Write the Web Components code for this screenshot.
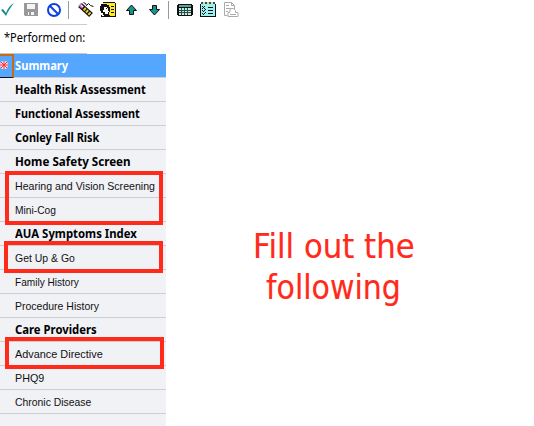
<!DOCTYPE html>
<html lang="en"><head><meta charset="utf-8"><title>Summary</title>
<style>body{margin:0;background:#fff;width:534px;height:426px;overflow:hidden}</style></head><body>
<assessment-app></assessment-app>
<script>
// Text run fitted horizontally to the width given in its "w" attribute.
class FitText extends HTMLElement{
 connectedCallback(){
  const r=this.attachShadow({mode:'open'});
  r.innerHTML='<style>:host{display:block;white-space:nowrap}span{display:inline-block;transform-origin:0 50%}</style><span><slot></slot></span>';
  const s=r.querySelector('span');
  s.style.transform=`scaleX(${+this.getAttribute('w')/s.offsetWidth})`;
 }
}
customElements.define('fit-text',FitText);

class ToolBar extends HTMLElement{
 connectedCallback(){
  this.attachShadow({mode:'open'}).innerHTML=`<style>
  :host{display:block;height:24px;width:534px}svg{display:block}</style>
  <svg width="260" height="24" viewBox="0 0 260 24">
   <path d="M1 10l2-1 3 4C8 8 10 5 14 3 11 7 8 11 6 16z" fill="#14918f"/>
   <path d="M24 3h14v13H25l-1-1z" fill="#999"/><path d="M27 4h8v5h-8zM28 12h6v3h-6z" fill="#f4f4f4"/><path d="M29 12h2v3h-2z" fill="#999"/>
   <circle cx="54" cy="10" r="6" fill="none" stroke="#0b3fe0" stroke-width="2"/><path d="M50 6l8 8" stroke="#0b3fe0" stroke-width="2"/>
   <path d="M68.500 1v18M168.500 1v18" stroke="#999"/>
   <path d="M80 5l11 10" stroke="#111" stroke-width="5.500"/><path d="M79.500 4.500l3.500 3" stroke="#d874cc" stroke-width="3"/><path d="M81 5l2 2" stroke="#fff"/>
   <path d="M84 8.500l7 6.500" stroke="#f2d81f" stroke-width="3.200" stroke-dasharray="2 1.200"/><path d="M84.500 10l5.500 5" stroke="#999" stroke-dasharray="1 1.500"/>
   <path d="M83.500 2.500l2 1 1 2 2-2 2 2 3 1" fill="none" stroke="#111"/>
   <g shape-rendering="crispEdges">
    <path d="M103 3h12v13h-12z" fill="#ffe926"/><path d="M103 2h12v1h-12zM115 3h1v14h-1zM110 16h6v1h-6z" fill="#111"/>
    <path d="M101 4h6v1h2v2h1v5h-1v3h1v2h-9v-2h2v-2h-2v-2h-1V6h1z" fill="#111"/>
    <path d="M104 7h3v1h1v3h1v1h-1v2h-3v-2h-2v-2h1zM102 15h2v1h-2z" fill="#fff"/><path d="M106 8h1v1h-1z" fill="#111"/>
    <path d="M111 6h3v1h-3zM111 9h3v1h-3zM111 12h3v1h-3z" fill="#111"/>
   </g>
   <path d="M131.500 5l5 5.500h-3v4h-4v-4h-3z" fill="#149590" stroke="#111"/>
   <path d="M154.500 15l5-5.500h-3v-4h-4v4h-3z" fill="#149590" stroke="#111"/>
   <g shape-rendering="crispEdges">
    <path d="M178 4h14v1h1v10h-1v1h-14v-1h-1V5h1z" fill="#111"/><path d="M179 5h12v2h-12z" fill="#51a59f"/><path d="M179 8h12v7h-12z" fill="#c9e5dc"/>
    <path d="M179 10h12M179 12.500h12M181.500 8v7M184.500 8v7M187.500 8v7" stroke="#26504a"/>
    <path d="M200 4h16v13h-16z" fill="#111"/><path d="M201 4h14v12h-14z" fill="#9bf2ee"/>
    <path d="M201 2h2v2h-2zM205 2h2v2h-2zM209 2h2v2h-2zM213 2h2v2h-2z" fill="#1648c8"/><path d="M203 2h2v2h-2zM207 2h2v2h-2zM211 2h2v2h-2z" fill="#ffe91f"/>
    <path d="M208 7h5v1h-5zM208 10h5v1h-5zM208 13h5v1h-5z" fill="#111"/><path d="M202 6h1v1h-1zM204 6h1v1h-1zM203 7h1v1h-1zM202 8h1v1h-1zM204 8h1v1h-1zM202 10h1v1h-1zM203 11h1v1h-1zM204 10h1v1h-1zM205 9h1v1h-1zM202 13h1v1h-1zM203 14h1v1h-1zM204 13h1v1h-1zM205 12h1v1h-1z" fill="#111"/>
   </g>
   <path d="M224.500 2.500h7l3 3v4M224.500 2.500v13h3M231.500 2.500v3h3M226 5.500h3M226 8.500h4M226 11.500h2M229.500 12.500l1-4h3l2 2v2h2.500v4h-10v-4zM230 14.500h6" fill="none" stroke="#aaa"/>
  </svg>`;
 }
}
customElements.define('tool-bar',ToolBar);

class NavRow extends HTMLElement{
 connectedCallback(){
  this.attachShadow({mode:'open'}).innerHTML=`<style>
  :host{display:flex;align-items:center;box-sizing:border-box;height:24px;padding:1px 0 0 15px;background:#f1f2f6;border-bottom:1px solid #ceced2;font:11.500px/22px "Liberation Sans",sans-serif;color:#111}
  :host([bold]){padding-top:0;font:bold 12px/23px "Noto Sans",sans-serif;color:#000}
  :host([active]){background:#55a6ff;color:#fff;padding-left:0}
  i{display:none;box-sizing:border-box;width:14px;height:24px;border:2px solid #c66b18;border-left:0;border-bottom:1px solid #111;margin-right:1px}
  :host([active]) i{display:block}svg{display:block;margin-top:3px}</style>
  <i><svg width="9" height="11"><path d="M4 2v8M0 6h8M1 3l6 6M7 3l-6 6" stroke="#ffe1e1" stroke-width="2.500"/><path d="M4 2v8M0 6h8M1 3l6 6M7 3l-6 6" stroke="#f2323b"/></svg></i><slot></slot>`;
 }
}
customElements.define('nav-row',NavRow);

// Red annotation frame laid over the list.
class MarkBox extends HTMLElement{
 connectedCallback(){
  this.attachShadow({mode:'open'}).innerHTML='<style>:host{display:block;position:absolute;box-sizing:border-box;border:4px solid #ff2a1a}</style>';
  const [x,y,w,h]=this.getAttribute('box').split(' ');
  Object.assign(this.style,{left:x+'px',top:y+'px',width:w+'px',height:h+'px'});
 }
}
customElements.define('mark-box',MarkBox);

class AssessmentApp extends HTMLElement{
 connectedCallback(){
  const rows=[['Summary',53,1],['Health Risk Assessment',131,1],['Functional Assessment',125,1],['Conley Fall Risk',84,1],['Home Safety Screen',116,1],['Hearing and Vision Screening',140],['Mini-Cog',41],['AUA Symptoms Index',122,1],['Get Up &amp; Go',60],['Family History',64],['Procedure History',84],['Care Providers',82,1],['Advance Directive',88],['PHQ9',29],['Chronic Disease',76]];
  this.attachShadow({mode:'open'}).innerHTML=`<style>
  :host{display:block;position:relative;width:534px;height:426px;background:#fff}
  .top{width:87px;height:1px;background:#ccc}
  .label{height:28px;box-sizing:border-box;padding:4px 0 0 4px;font:12px/18px "Noto Sans",sans-serif;color:#000}
  .end{width:87px;height:1px;background:#c4c4c4}
  .body{display:flex;height:372px}nav{width:166px;background:#f1f2f6}
  .note{padding:172px 0 0 87px;font:34px/41px "DejaVu Sans",sans-serif;color:#ff2a1a;-webkit-text-stroke:.2px #ff2a1a}.note fit-text+fit-text{margin-left:13px}</style>
  <tool-bar></tool-bar><div class="top"></div><div class="label"><fit-text w="81">*Performed on:</fit-text></div><div class="end"></div>
  <div class="body"><nav>${rows.map((r,i)=>`<nav-row ${r[2]?'bold':''} ${i?'':'active'}><fit-text w="${r[1]}">${r[0]}</fit-text></nav-row>`).join('')}</nav>
  <div class="note"><fit-text w="162">Fill out the</fit-text><fit-text w="135">following</fit-text></div></div>
  <mark-box box="5 171 158 54"></mark-box><mark-box box="4 241 159 32"></mark-box><mark-box box="5 337 159 32"></mark-box>`;
 }
}
customElements.define('assessment-app',AssessmentApp);
</script></body></html>
